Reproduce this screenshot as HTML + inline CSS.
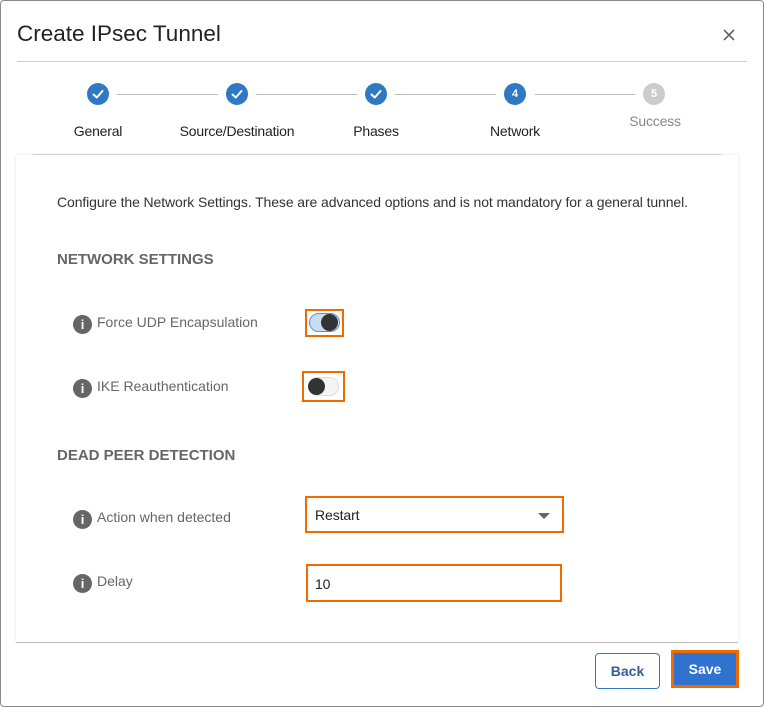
<!DOCTYPE html>
<html><head><style>
*{box-sizing:border-box;margin:0;padding:0}
body{width:764px;height:707px;background:#fff;font-family:"Liberation Sans",sans-serif;position:relative;overflow:hidden}
.frame{position:absolute;left:0;top:0;width:764px;height:707px;border:1px solid #8a8a8a;border-radius:4px}
.a{position:absolute}
.title{left:17px;top:21px;font-size:22.5px;color:#222}
.hr{height:1px;background:#ccc}
.c{width:22px;height:22px;border-radius:50%;background:#2f78c4;color:#fff;font-size:11px;font-weight:bold;display:flex;align-items:center;justify-content:center}
.ln{height:1px;background:#bbb;top:94px}
.lbl{font-size:14px;color:#222;transform:translateX(-50%);white-space:nowrap;letter-spacing:-0.2px}
.card{left:16px;top:155px;width:722px;height:487px;box-shadow:0 0 3px rgba(0,0,0,.12)}
.txt{font-size:14px;color:#333;letter-spacing:-0.1px}
.h{font-size:15px;font-weight:bold;color:#666}
.fl{font-size:14px;color:#666}
.i{width:19px;height:19px;border-radius:50%;background:#666;color:#fff;font-weight:bold;font-size:13px;display:flex;align-items:center;justify-content:center}
.ob{border:2px solid #f06a00}
</style></head><body>
<div class="frame"></div>
<div class="a title">Create IPsec Tunnel</div>
<svg class="a" style="left:723px;top:29px" width="12" height="12" viewBox="0 0 12 12"><path d="M1 1L11 11M11 1L1 11" stroke="#666" stroke-width="1.6"/></svg>
<div class="a hr" style="left:17px;top:61px;width:730px"></div>

<svg width="0" height="0" style="position:absolute"><defs><symbol id="ck" viewBox="0 0 22 22"><path d="M6.5 11.5L9.8 14.5L15.5 8" fill="none" stroke="#fff" stroke-width="2" stroke-linecap="round" stroke-linejoin="round"/></symbol></defs></svg>
<div class="a c" style="left:87px;top:83px"><svg width="22" height="22"><use href="#ck"/></svg></div>
<div class="a c" style="left:226px;top:83px"><svg width="22" height="22"><use href="#ck"/></svg></div>
<div class="a c" style="left:365px;top:83px"><svg width="22" height="22"><use href="#ck"/></svg></div>
<div class="a c" style="left:504px;top:83px">4</div>
<div class="a c" style="left:643px;top:83px;background:#ccc">5</div>
<div class="a ln" style="left:117px;width:101px"></div>
<div class="a ln" style="left:256px;width:101px"></div>
<div class="a ln" style="left:395px;width:101px"></div>
<div class="a ln" style="left:535px;width:100px"></div>
<div class="a lbl" style="left:98px;top:123px">General</div>
<div class="a lbl" style="left:237px;top:123px">Source/Destination</div>
<div class="a lbl" style="left:376px;top:123px">Phases</div>
<div class="a lbl" style="left:515px;top:123px">Network</div>
<div class="a lbl" style="left:655px;top:113px;color:#888">Success</div>

<div class="a card"></div>
<div class="a hr" style="left:33px;top:154px;width:688px"></div>
<div class="a txt" style="left:57px;top:194px">Configure the Network Settings. These are advanced options and is not mandatory for a general tunnel.</div>
<div class="a h" style="left:57px;top:251px">NETWORK SETTINGS</div>

<div class="a i" style="left:73px;top:315px">i</div>
<div class="a fl" style="left:97px;top:314px">Force UDP Encapsulation</div>
<div class="a ob" style="left:305px;top:309px;width:39px;height:28px"></div>
<div class="a" style="left:309px;top:313px;width:31px;height:19px;border-radius:10px;background:#c8dcf3;border:1px solid #5a90d8"></div>
<div class="a" style="left:321px;top:314px;width:17px;height:17px;border-radius:50%;background:#333"></div>

<div class="a i" style="left:73px;top:379px">i</div>
<div class="a fl" style="left:97px;top:378px">IKE Reauthentication</div>
<div class="a ob" style="left:302px;top:371px;width:43px;height:31px"></div>
<div class="a" style="left:308px;top:377px;width:31px;height:19px;border-radius:10px;background:#f4f4f4;border:1px solid #ddd"></div>
<div class="a" style="left:308px;top:378px;width:17px;height:17px;border-radius:50%;background:#333"></div>

<div class="a h" style="left:57px;top:447px">DEAD PEER DETECTION</div>

<div class="a i" style="left:73px;top:510px">i</div>
<div class="a fl" style="left:97px;top:509px">Action when detected</div>
<div class="a ob" style="left:305px;top:496px;width:259px;height:37px"></div>
<div class="a txt" style="left:315px;top:507px;color:#222">Restart</div>
<div class="a" style="left:538px;top:513px;width:0;height:0;border-left:6px solid transparent;border-right:6px solid transparent;border-top:6px solid #666"></div>

<div class="a i" style="left:73px;top:574px">i</div>
<div class="a fl" style="left:97px;top:573px">Delay</div>
<div class="a ob" style="left:306px;top:564px;width:256px;height:38px"></div>
<div class="a txt" style="left:315px;top:576px;color:#222">10</div>

<div class="a hr" style="left:16px;top:642px;width:722px;background:#bbb"></div>
<div class="a" style="left:595px;top:653px;width:65px;height:36px;border:1px solid #2f78c4;border-radius:4px;color:#2f5f9c;font-weight:bold;font-size:14px;display:flex;align-items:center;justify-content:center">Back</div>
<div class="a" style="left:671px;top:650px;width:68px;height:38px;border:3px solid #f06a00;background:#2f72cf;color:#fff;font-weight:bold;font-size:14px;display:flex;align-items:center;justify-content:center">Save</div>
</body></html>
